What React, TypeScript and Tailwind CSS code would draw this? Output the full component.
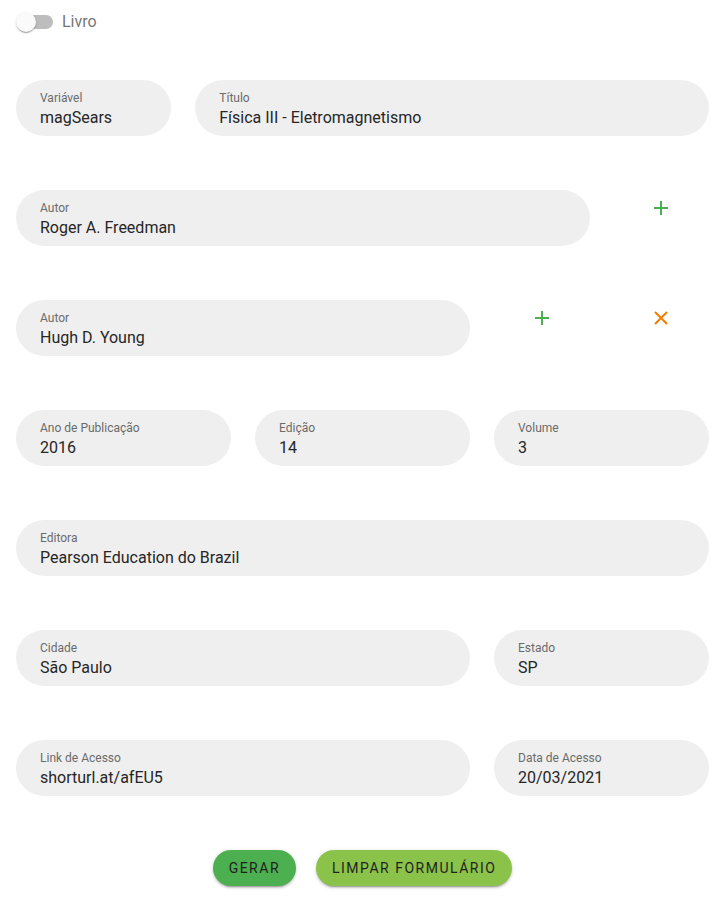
import { useState } from 'react'

function Field({ label, value, className }: { label: string; value: string; className?: string }) {
  return (
    <div className={`h-14 rounded-full bg-[#efefef] px-6 pt-[10px] ${className ?? ''}`}>
      <div className="text-xs leading-4 text-[#6b6b6b]">{label}</div>
      <div className="text-base leading-6 text-[#262626]">{value}</div>
    </div>
  )
}

function PlusIcon() {
  return (
    <svg width="14" height="14" viewBox="0 0 14 14" className="text-[#4caf50]">
      <path d="M7 0v14M0 7h14" stroke="currentColor" strokeWidth="2" />
    </svg>
  )
}

function CloseIcon() {
  return (
    <svg width="14" height="14" viewBox="0 0 14 14" className="text-[#f57c00]">
      <path d="M1 1l12 12M13 1L1 13" stroke="currentColor" strokeWidth="2" />
    </svg>
  )
}

export default function App() {
  const [livro, setLivro] = useState(false)

  return (
    <main className="min-h-[903px] bg-white px-4 pt-[10px] pb-4" style={{ fontFamily: 'Roboto, "Noto Sans", sans-serif' }}>
      <label className="flex items-center gap-2 cursor-pointer" onClick={() => setLivro(!livro)}>
        <span className="relative flex h-5 w-[38px] items-center">
          <span className="ml-[3px] h-[14px] w-[34px] rounded-full bg-[#bdbdbd]" />
          <span className="absolute left-0 top-0 h-5 w-5 rounded-full bg-[#fafafa] shadow-[0_2px_1px_-1px_rgba(0,0,0,0.2),0_1px_1px_0_rgba(0,0,0,0.14),0_1px_3px_0_rgba(0,0,0,0.12)]" />
        </span>
        <span className="text-base text-[#777777]">Livro</span>
      </label>

      <div className="mt-[46px] grid grid-cols-12 gap-x-6 gap-y-[54px]">
        <Field className="col-span-3" label="Variável" value="magSears" />
        <Field className="col-span-9" label="Título" value="Física III - Eletromagnetismo" />

        <Field className="col-span-10" label="Autor" value="Roger A. Freedman" />
        <div className="col-span-2 flex justify-center pt-[11px]">
          <PlusIcon />
        </div>

        <Field className="col-span-8" label="Autor" value="Hugh D. Young" />
        <div className="col-span-2 flex justify-center pt-[11px]">
          <PlusIcon />
        </div>
        <div className="col-span-2 flex justify-center pt-[11px]">
          <CloseIcon />
        </div>

        <Field className="col-span-4" label="Ano de Publicação" value="2016" />
        <Field className="col-span-4" label="Edição" value="14" />
        <Field className="col-span-4" label="Volume" value="3" />

        <Field className="col-span-12" label="Editora" value="Pearson Education do Brazil" />

        <Field className="col-span-8" label="Cidade" value="São Paulo" />
        <Field className="col-span-4" label="Estado" value="SP" />

        <Field className="col-span-8" label="Link de Acesso" value="shorturl.at/afEU5" />
        <Field className="col-span-4" label="Data de Acesso" value="20/03/2021" />
      </div>

      <div className="mt-[54px] flex justify-center gap-5">
        <button className="h-9 rounded-full bg-[#4caf50] px-4 text-sm font-normal tracking-[1.5px] text-[#1f1f1f] shadow-[0_3px_1px_-2px_rgba(0,0,0,0.2),0_2px_2px_0_rgba(0,0,0,0.14),0_1px_5px_0_rgba(0,0,0,0.12)]">
          GERAR
        </button>
        <button className="h-9 rounded-full bg-[#8bc34a] px-4 text-sm font-normal tracking-[1.5px] text-[#1f1f1f] shadow-[0_3px_1px_-2px_rgba(0,0,0,0.2),0_2px_2px_0_rgba(0,0,0,0.14),0_1px_5px_0_rgba(0,0,0,0.12)]">
          LIMPAR FORMULÁRIO
        </button>
      </div>
    </main>
  )
}
